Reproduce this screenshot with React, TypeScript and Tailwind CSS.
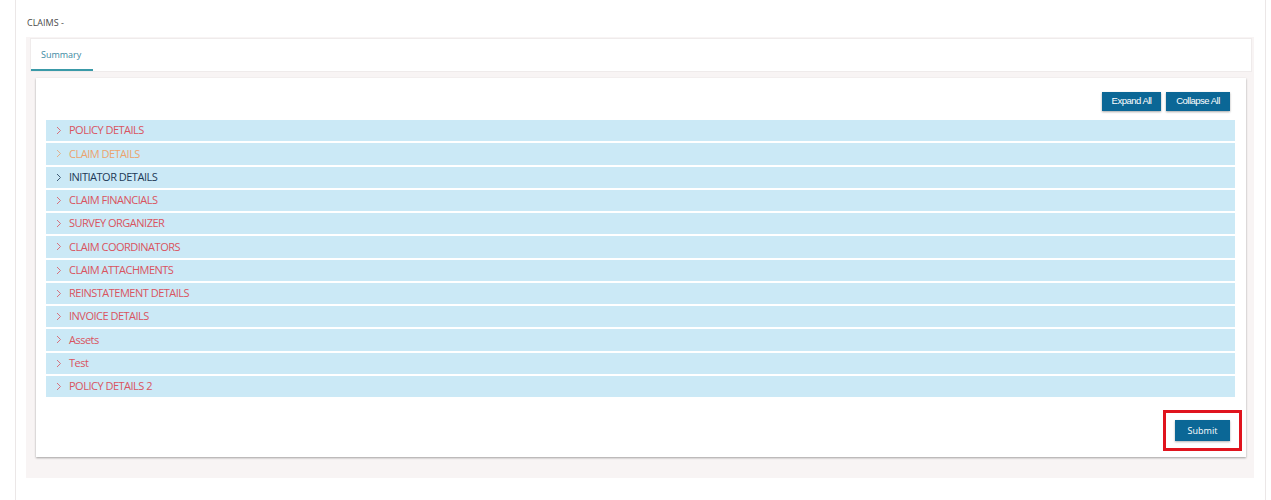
const SECTIONS: { label: string; color: string }[] = [
  { label: "POLICY DETAILS", color: "text-[#d9545f]" },
  { label: "CLAIM DETAILS", color: "text-[#eba36e]" },
  { label: "INITIATOR DETAILS", color: "text-[#1d3a57]" },
  { label: "CLAIM FINANCIALS", color: "text-[#d9545f]" },
  { label: "SURVEY ORGANIZER", color: "text-[#d9545f]" },
  { label: "CLAIM COORDINATORS", color: "text-[#d9545f]" },
  { label: "CLAIM ATTACHMENTS", color: "text-[#d9545f]" },
  { label: "REINSTATEMENT DETAILS", color: "text-[#d9545f]" },
  { label: "INVOICE DETAILS", color: "text-[#d9545f]" },
  { label: "Assets", color: "text-[#d9545f]" },
  { label: "Test", color: "text-[#d9545f]" },
  { label: "POLICY DETAILS 2", color: "text-[#d9545f]" },
];

function Chevron() {
  return (
    <svg width="6" height="9" viewBox="0 0 6 9" fill="none" className="shrink-0 opacity-80">
      <path d="M1 1l3.5 3.5L1 8" stroke="currentColor" strokeWidth="1" />
    </svg>
  );
}

export default function App() {
  return (
    <div className="min-h-[500px] bg-white font-['Open_Sans',sans-serif]">
      <div className="ml-[15px] w-[1251px] min-h-[500px] border-x border-[#ebe7e7] pl-[10px] pr-[11px]">
        <div className="pt-[16px] pl-[1px] h-[37px] text-[9px] text-[#4a4a4a]">CLAIMS -</div>

        <div className="bg-[#f8f4f4] pl-[4px] pr-[2px] pt-[1px] pb-[21px] w-[1228px]">
          <div className="bg-white border border-[#efebeb] h-[34px] flex items-end">
            <div className="w-[62px] h-full flex items-center pl-[10px] pt-[1px] text-[9px] text-[#3c8aa3] border-b-2 border-[#3a9aa8]">
              Summary
            </div>
          </div>

          <div className="ml-[6px] mr-[6px] mt-[6px] bg-white shadow-[0_1px_2px_rgba(0,0,0,0.35)] h-[379px] pl-[10px] pr-[11px] pt-[14px]">
            <div className="flex justify-end gap-[5px] pr-[5px]">
              <button className="h-[19px] w-[59px] bg-[#0b6796] text-white text-[9.5px] tracking-[-0.5px] font-['Liberation_Sans',sans-serif] shadow-[0_1px_2px_rgba(0,0,0,0.35)]">
                Expand All
              </button>
              <button className="h-[19px] w-[64px] bg-[#0b6796] text-white text-[9.5px] tracking-[-0.5px] font-['Liberation_Sans',sans-serif] shadow-[0_1px_2px_rgba(0,0,0,0.35)]">
                Collapse All
              </button>
            </div>

            <div className="mt-[9px] flex flex-col gap-[2px]">
              {SECTIONS.map((s) => (
                <div key={s.label} className="h-[21.25px] bg-[#cbe9f6] flex items-center pl-[10px] gap-[7px]">
                  <span className={s.color}>
                    <Chevron />
                  </span>
                  <span className={`text-[11px] tracking-[-0.5px] ${s.color}`}>{s.label}</span>
                </div>
              ))}
            </div>

            <div className="flex justify-end mt-[13px]">
              <div className="border-[3px] border-[#e0141e] px-[9px] py-[7px] -mr-[7px] flex">
                <button className="h-[21px] w-[55px] bg-[#0b6796] text-white text-[9px] shadow-[0_1px_2px_rgba(0,0,0,0.3)]">
                  Submit
                </button>
              </div>
            </div>
          </div>
        </div>
      </div>
    </div>
  );
}
